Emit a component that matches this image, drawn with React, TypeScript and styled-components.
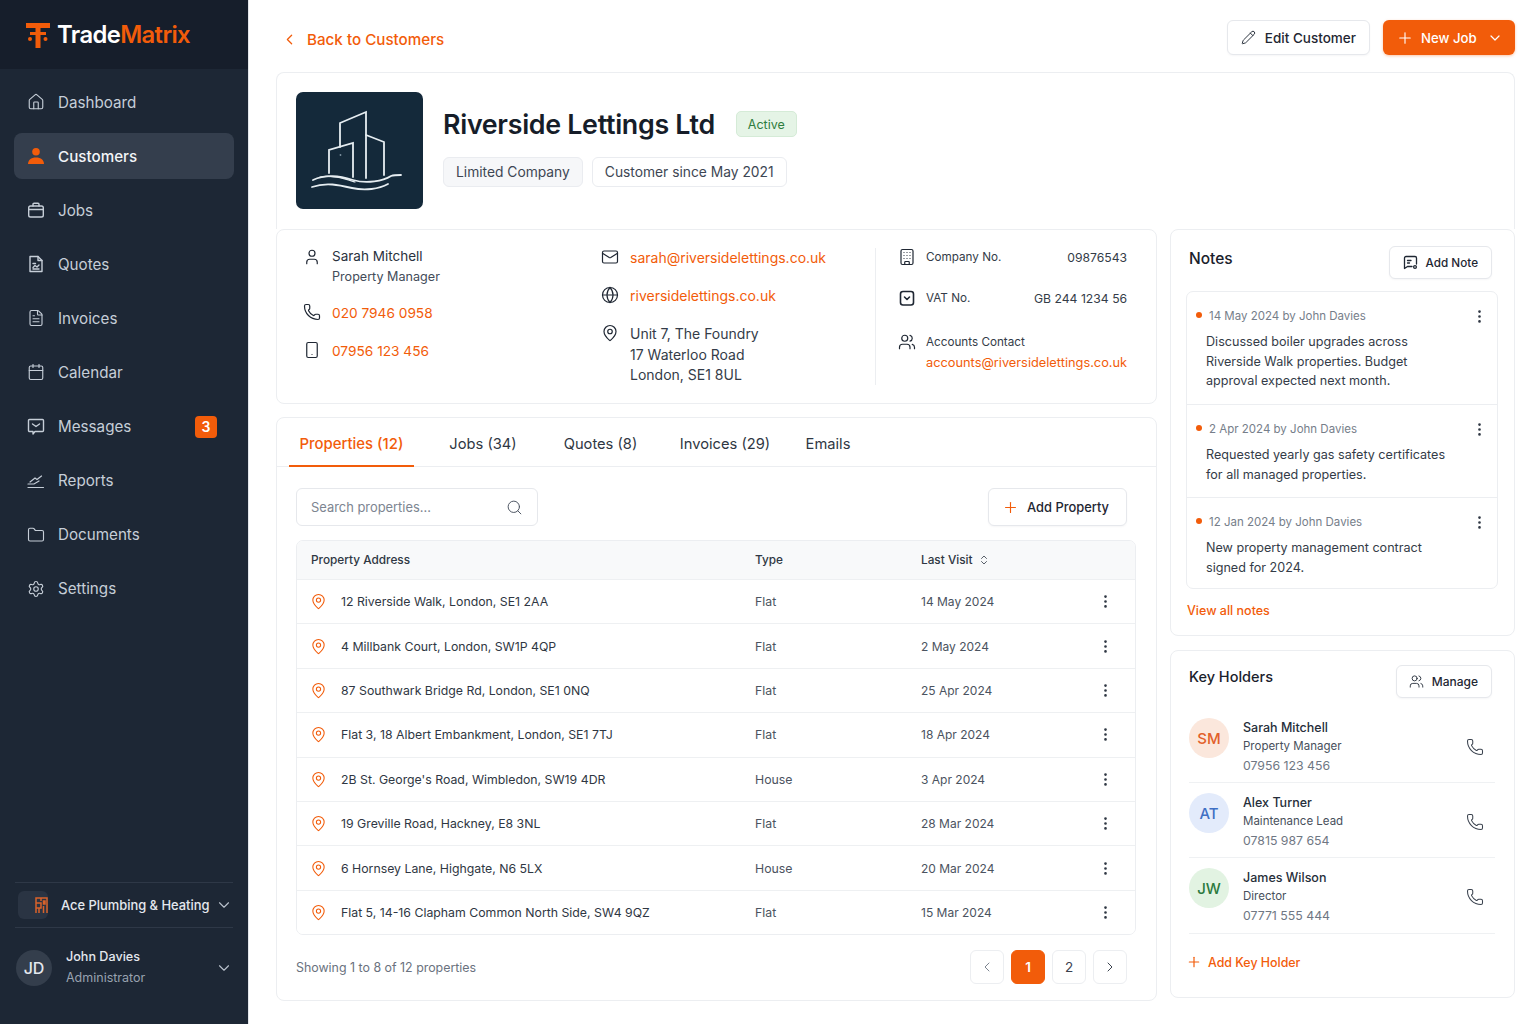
import { ReactNode } from "react";
import styled, { createGlobalStyle } from "styled-components";
import {
  Home,
  FileText,
  Calendar,
  Folder,
  Settings,
  ChevronDown,
  ChevronLeft,
  ChevronRight,
  ChevronsUpDown,
  Pencil,
  Plus,
  User,
  Phone,
  Smartphone,
  Mail,
  Globe,
  MapPin,
  Building,
  Users,
  Search,
  MoreVertical,
} from "lucide-react";

const ORANGE = "#f25c0a";
const INK = "#1f2733";

const GlobalStyle = createGlobalStyle`
  * { box-sizing: border-box; }
  html, body { margin: 0; height: 1024px; overflow: hidden; background: #fff; }
  body { font-family: Inter, "Noto Sans", sans-serif; color: ${INK}; }
`;

const Page = styled.div`
  display: flex;
  height: 1024px;
`;

// sidebar
const Sidebar = styled.aside`
  width: 249px;
  flex: none;
  background: #1d2735;
  border-right: 1px solid #e3e6ea;
  display: flex;
  flex-direction: column;
`;

const Brand = styled.div`
  height: 69px;
  flex: none;
  background: #161e2b;
  display: flex;
  align-items: center;
  gap: 6px;
  padding: 0 0 0 25px;
`;

const BrandName = styled.div`
  font-size: 23.8px;
  font-weight: 600;
  letter-spacing: -0.6px;
  color: #fff;
  span {
    color: ${ORANGE};
  }
`;

const Nav = styled.nav`
  display: flex;
  flex-direction: column;
  gap: 8.1px;
  padding: 10px 14px 0;
`;

const NavItem = styled.div<{ $active?: boolean }>`
  height: 46px;
  display: flex;
  align-items: center;
  gap: 13px;
  padding: 0 17px 0 13px;
  border-radius: 8px;
  font-size: 15.2px;
  font-weight: ${(p) => (p.$active ? 500 : 400)};
  color: ${(p) => (p.$active ? "#f3f5f8" : "#c6ced8")};
  background: ${(p) => (p.$active ? "#343e4d" : "transparent")};
  svg {
    flex: none;
    color: ${(p) => (p.$active ? ORANGE : "#c6ced8")};
  }
`;

const NavBadge = styled.span`
  margin-left: auto;
  width: 22px;
  height: 22px;
  border-radius: 4px;
  background: ${ORANGE};
  color: #fff;
  font-size: 14px;
  font-weight: 600;
  display: flex;
  align-items: center;
  justify-content: center;
`;

const SideFooter = styled.div`
  margin-top: auto;
  padding: 0 15px 35px 15px;
`;

const CompanyRow = styled.div`
  height: 46px;
  display: flex;
  align-items: center;
  border-top: 1px solid #2e3847;
  border-bottom: 1px solid #2e3847;
  padding: 0 0 0 3px;
  font-size: 12.9px;
  font-weight: 500;
  white-space: nowrap;
  color: #e4e8ee;
  svg:last-child {
    flex: none;
    margin-left: auto;
    color: #b9c1cc;
  }
`;

const CompanyIcon = styled.div`
  width: 30px;
  height: 28px;
  flex: none;
  margin-right: 13px;
  border-radius: 6px;
  background: #2a3443;
  display: flex;
  align-items: center;
  justify-content: center;
`;

const UserRow = styled.div`
  display: flex;
  align-items: center;
  gap: 14px;
  padding: 19px 0 0 1px;
  svg {
    margin-left: auto;
    color: #b9c1cc;
  }
`;

const UserAvatar = styled.div`
  width: 36px;
  height: 36px;
  border-radius: 50%;
  background: #343e4c;
  color: #e4e8ee;
  font-size: 16px;
  font-weight: 500;
  display: flex;
  align-items: center;
  justify-content: center;
`;

const UserName = styled.div`
  font-size: 12.6px;
  font-weight: 500;
  color: #e4e8ee;
  line-height: 20px;
`;

const UserRole = styled.div`
  font-size: 12.5px;
  color: #98a2b0;
  line-height: 22px;
`;

// main area
const Main = styled.main`
  flex: 1;
  min-width: 0;
  padding: 20px 21px 0 27px;
  display: flex;
  flex-direction: column;
`;

const TopBar = styled.div`
  height: 35px;
  display: flex;
  align-items: center;
  justify-content: space-between;
  margin-bottom: 17px;
`;

const BackLink = styled.a`
  display: flex;
  align-items: center;
  gap: 9px;
  color: ${ORANGE};
  font-size: 15.2px;
  font-weight: 500;
  padding: 3px 0 0 5px;
`;

const TopActions = styled.div`
  display: flex;
  gap: 13px;
`;

const OutlineButton = styled.button<{ $h?: number; $fs?: number; $pad?: string; $gap?: number }>`
  height: ${(p) => p.$h ?? 35}px;
  display: flex;
  align-items: center;
  gap: ${(p) => p.$gap ?? 9}px;
  padding: ${(p) => p.$pad ?? "0 13px"};
  background: #fff;
  border: 1px solid #e6e8ec;
  border-radius: 6px;
  font-family: inherit;
  font-size: ${(p) => p.$fs ?? 13.5}px;
  font-weight: 500;
  white-space: nowrap;
  color: ${INK};
  box-shadow: 0 1px 2px rgba(20, 30, 45, 0.04);
`;

const PrimaryButton = styled.button`
  height: 35px;
  width: 132px;
  display: flex;
  align-items: center;
  padding: 0 12px 0 13px;
  background: ${ORANGE};
  border: none;
  border-radius: 6px;
  font-family: inherit;
  font-size: 13.2px;
  font-weight: 500;
  white-space: nowrap;
  color: #fff;
  gap: 7px;
  box-shadow: 0 1px 3px rgba(242, 92, 10, 0.35);
  svg:last-child {
    margin-left: auto;
  }
`;

const HeaderCard = styled.section`
  height: 157px;
  flex: none;
  border: 1px solid #eceef1;
  border-bottom: none;
  border-radius: 8px 8px 0 0;
  padding: 19px 19px;
  display: flex;
  gap: 20px;
`;

const CustomerLogo = styled.div`
  width: 127px;
  height: 117px;
  border-radius: 7px;
  background: #14293a;
  flex: none;
  svg {
    display: block;
  }
`;

const HeaderInfo = styled.div`
  padding-top: 13px;
`;

const TitleRow = styled.div`
  display: flex;
  align-items: center;
  gap: 21px;
  height: 38px;
`;

const Title = styled.h1`
  margin: 0;
  font-size: 26.8px;
  font-weight: 600;
  letter-spacing: -0.3px;
  color: #161d29;
`;

const StatusPill = styled.span`
  height: 26px;
  padding: 0 11px;
  display: flex;
  align-items: center;
  border-radius: 5px;
  background: #e5f4e6;
  border: 1px solid #d5ebd7;
  font-size: 12.5px;
  color: #2f7d40;
`;

const TagRow = styled.div`
  display: flex;
  gap: 9px;
  margin-top: 14px;
`;

const Tag = styled.span<{ $tint?: boolean }>`
  height: 30px;
  display: flex;
  align-items: center;
  padding: 0 12px;
  border-radius: 6px;
  border: 1px solid #eaecf0;
  background: ${(p) => (p.$tint ? "#f6f7f9" : "#fff")};
  font-size: 13.8px;
  color: #3d4653;
`;

const Columns = styled.div`
  display: grid;
  grid-template-columns: 881px 345px;
  gap: 13px;
`;

const Column = styled.div<{ $gap: number }>`
  display: flex;
  flex-direction: column;
  gap: ${(p) => p.$gap}px;
`;

const Card = styled.section<{ $h: number }>`
  height: ${(p) => p.$h}px;
  border: 1px solid #eceef1;
  border-radius: 8px;
  background: #fff;
`;

// contact card
const InfoGrid = styled.div`
  display: grid;
  grid-template-columns: 298px 274px 1fr;
  padding: 18px 29px 0 26px;
`;

const InfoCol = styled.div``;

const InfoLine = styled.div<{ $h: number }>`
  display: flex;
  gap: 11px;
  height: ${(p) => p.$h}px;
  svg {
    flex: none;
    color: ${INK};
  }
`;

const InfoName = styled.div`
  font-size: 13.5px;
  line-height: 17px;
  color: #2a323e;
`;

const InfoSub = styled.div`
  font-size: 12.6px;
  line-height: 23px;
  color: #434c59;
`;

const LinkText = styled.a<{ $fs?: number; $lh?: number }>`
  color: ${ORANGE};
  font-size: ${(p) => p.$fs ?? 14}px;
  line-height: ${(p) => p.$lh ?? 20}px;
  display: block;
`;

const Address = styled.div`
  font-size: 14px;
  line-height: 20.5px;
  color: #343c48;
`;

const RegCol = styled.div`
  border-left: 1px solid #eceef1;
  padding-left: 22px;
  height: 137px;
`;

const RegRow = styled.div<{ $h: number }>`
  display: flex;
  gap: 10px;
  height: ${(p) => p.$h}px;
  font-size: 11.7px;
  color: #343c48;
  line-height: 19px;
  svg {
    flex: none;
    color: ${INK};
  }
`;

const RegBody = styled.div`
  flex: 1;
  display: flex;
  justify-content: space-between;
`;

const RegValue = styled.span`
  font-size: 12.2px;
`;

// tabs
const Tabs = styled.div`
  height: 49px;
  display: flex;
  align-items: stretch;
  border-bottom: 1px solid #eceef1;
  padding-left: 12px;
`;

const Tab = styled.div<{ $active?: boolean; $w: number }>`
  width: ${(p) => p.$w}px;
  display: flex;
  align-items: center;
  justify-content: center;
  padding-top: 4px;
  margin-bottom: -1px;
  font-size: ${(p) => (p.$active ? 14.9 : 14.7)}px;
  color: ${(p) => (p.$active ? ORANGE : "#2f3743")};
  font-weight: ${(p) => (p.$active ? 500 : 400)};
  border-bottom: 2px solid ${(p) => (p.$active ? ORANGE : "transparent")};
`;

const Toolbar = styled.div`
  display: flex;
  justify-content: space-between;
  padding: 21px 29px 14px 19px;
`;

const SearchBox = styled.div`
  width: 242px;
  height: 38px;
  display: flex;
  align-items: center;
  justify-content: space-between;
  padding: 0 14px;
  border: 1px solid #e6e8ec;
  border-radius: 6px;
  font-size: 12.9px;
  color: #7d8591;
  svg {
    color: #4e5663;
  }
`;

const AddPropertyIcon = styled(Plus)`
  color: ${ORANGE};
`;

const TableBox = styled.div`
  margin: 0 20px 0 19px;
  border: 1px solid #eceef1;
  border-radius: 7px;
  overflow: hidden;
`;

const Row = styled.div<{ $head?: boolean }>`
  height: ${(p) => (p.$head ? 38 : 44.4)}px;
  display: grid;
  grid-template-columns: 444px 166px 1fr 40px;
  align-items: center;
  padding-left: 14px;
  font-size: ${(p) => (p.$head ? 11.8 : 12.3)}px;
  color: #2f3743;
  background: ${(p) => (p.$head ? "#f8f9fa" : "#fff")};
  font-weight: ${(p) => (p.$head ? 500 : 400)};
  & + & {
    border-top: 1px solid #eef0f2;
  }
`;

const AddressCell = styled.div`
  display: flex;
  align-items: center;
  gap: 14px;
  svg {
    flex: none;
    color: ${ORANGE};
    margin-left: -1px;
  }
`;

const MutedCell = styled.div`
  color: #4b5360;
`;

const DateCell = styled(MutedCell)`
  font-size: 12px;
`;

const SortCell = styled.div`
  display: flex;
  align-items: center;
  gap: 5px;
`;

const KebabCell = styled.div`
  display: flex;
  margin-left: 2px;
  svg {
    color: #2f3743;
  }
`;

const TableFooter = styled.div`
  display: flex;
  align-items: center;
  justify-content: space-between;
  padding: 15px 29px 0 19px;
  font-size: 12.4px;
  color: #6a727e;
`;

const Pager = styled.div`
  display: flex;
  gap: 7px;
`;

const PageButton = styled.div<{ $active?: boolean }>`
  width: 34px;
  height: 34px;
  display: flex;
  align-items: center;
  justify-content: center;
  border-radius: 6px;
  font-size: 13.5px;
  font-weight: ${(p) => (p.$active ? 600 : 400)};
  color: ${(p) => (p.$active ? "#fff" : "#3a424e")};
  background: ${(p) => (p.$active ? ORANGE : "#fff")};
  border: 1px solid ${(p) => (p.$active ? ORANGE : "#eceef1")};
`;

// right column
const PanelHead = styled.div<{ $pad: string }>`
  display: flex;
  align-items: flex-start;
  justify-content: space-between;
  padding: ${(p) => p.$pad};
`;

const PanelTitle = styled.h2<{ $fs: number }>`
  margin: 0;
  padding-top: 3px;
  font-size: ${(p) => p.$fs}px;
  font-weight: 500;
  color: #1a212c;
`;

const NotesBox = styled.div`
  margin: 12px 16px 0 15px;
  border: 1px solid #eceef1;
  border-radius: 7px;
`;

const Note = styled.div<{ $h: number }>`
  height: ${(p) => p.$h}px;
  padding: 14px 9px 0 9px;
  & + & {
    border-top: 1px solid #eceef1;
  }
`;

const NoteMeta = styled.div`
  display: flex;
  align-items: center;
  gap: 7px;
  height: 20px;
  font-size: 11.5px;
  color: #767e8a;
  svg {
    margin-left: auto;
    color: #2f3743;
  }
`;

const NoteDot = styled.span`
  width: 6px;
  height: 6px;
  border-radius: 50%;
  background: ${ORANGE};
  margin-bottom: 2px;
`;

const NoteText = styled.p`
  margin: 6px 0 0 10px;
  font-size: 12.6px;
  line-height: 19.7px;
  color: #343c48;
`;

const ViewAll = styled.a`
  display: block;
  margin: 14px 0 0 16px;
  font-size: 12.5px;
  font-weight: 500;
  color: ${ORANGE};
`;

const Holder = styled.div<{ $h: number }>`
  height: ${(p) => p.$h}px;
  margin: 0 19px 0 18px;
  padding-top: 10px;
  display: flex;
  align-items: flex-start;
  gap: 14px;
  border-bottom: 1px solid #eff1f3;
`;

const HolderAvatar = styled.div<{ $bg: string; $fg: string }>`
  width: 40px;
  height: 40px;
  flex: none;
  border-radius: 50%;
  background: ${(p) => p.$bg};
  color: ${(p) => p.$fg};
  font-size: 15px;
  font-weight: 500;
  display: flex;
  align-items: center;
  justify-content: center;
`;

const HolderBody = styled.div`
  flex: 1;
`;

const HolderName = styled.div`
  font-size: 12.5px;
  font-weight: 500;
  line-height: 19px;
  color: #262e3a;
`;

const HolderRole = styled.div`
  font-size: 11.5px;
  line-height: 19px;
  color: #48505c;
`;

const HolderPhone = styled.div`
  font-size: 12.3px;
  line-height: 19px;
  color: #6f7783;
`;

const HolderCall = styled.div`
  padding: 20px 11px 0 0;
  color: #3a424e;
`;

const AddHolder = styled.a`
  display: flex;
  align-items: center;
  gap: 6px;
  padding: 20px 0 0 15px;
  font-size: 12.4px;
  font-weight: 500;
  color: ${ORANGE};
`;

// drawings
const BrandMark = () => (
  <svg width="26" height="26" viewBox="0 0 26 26" fill="none">
    <path d="M1 1h24v5H15.500v20h-5V6H1z" fill={ORANGE} />
    <rect x="15" y="10" width="6" height="3" fill={ORANGE} />
    <rect x="5" y="10" width="6" height="3" fill={ORANGE} />
    <circle cx="5" cy="17" r="2" fill={ORANGE} />
    <circle cx="20.500" cy="17" r="2" fill={ORANGE} />
  </svg>
);

const FilledUser = () => (
  <svg width="18" height="18" viewBox="0 0 18 18" fill={ORANGE}>
    <circle cx="9" cy="4.800" r="3.800" />
    <path d="M1 17c0-4 3-6.600 8-6.600s8 2.600 8 6.600z" />
  </svg>
);

const JobsIcon = () => (
  <svg width="18" height="18" viewBox="0 0 18 18" fill="none" stroke="currentColor" strokeWidth="1.400" strokeLinecap="round" strokeLinejoin="round">
    <rect x="1.700" y="5" width="14.600" height="11" rx="1.800" />
    <path d="M6 5V3.200a1 1 0 0 1 1-1h4a1 1 0 0 1 1 1V5M1.700 8.500h14.600" />
  </svg>
);

const ReportsIcon = () => (
  <svg width="18" height="18" viewBox="0 0 18 18" fill="none" stroke="currentColor" strokeWidth="1.200" strokeLinecap="round">
    <path d="M1 15.500h15.500M1 12h6l5-3M3 10l5-4 2 1.500 4.500-3.500" />
  </svg>
);

const QuoteIcon = () => (
  <svg width="18" height="18" viewBox="0 0 18 18" fill="none" stroke="currentColor" strokeWidth="1.400" strokeLinejoin="round" strokeLinecap="round">
    <path d="M3 1.500h8l4 4v11H3z" />
    <path d="M11 1.500v4h4M6 8.500h2.500M6 12.500l2-2 2 1.500 2-2M6 14h6" />
  </svg>
);

const MessageIcon = () => (
  <svg width="18" height="18" viewBox="0 0 18 18" fill="none" stroke="currentColor" strokeWidth="1.400" strokeLinejoin="round" strokeLinecap="round">
    <path d="M2.500 1.500h13a1 1 0 0 1 1 1v10a1 1 0 0 1-1 1H8l-2 2.500v-2.500H2.500a1 1 0 0 1-1-1v-10a1 1 0 0 1 1-1z" />
    <path d="M5.500 6l3.500 2.500L12.500 6" />
  </svg>
);

const AddNoteIcon = () => (
  <svg width="15" height="15" viewBox="0 0 15 15" fill="none" stroke="currentColor" strokeWidth="1.300" strokeLinecap="round" strokeLinejoin="round">
    <path d="M9 11.500H4.500l-3 2V3a1.500 1.500 0 0 1 1.500-1.500h9A1.500 1.500 0 0 1 13.500 3v6" />
    <path d="M4.500 5.500h3.500M4.500 8h2" />
    <circle cx="12" cy="12" r="1.400" />
  </svg>
);

const CompanyMark = () => (
  <svg width="13" height="17" viewBox="0 0 13 17" fill="none" stroke="#d9622b" strokeWidth="1.500">
    <path d="M1 16V1h11v15M1 6h5v5H1M6 1v3M8.500 4h1.500v3H8.500zM8.500 9v7M4 11v5" />
  </svg>
);

const VatIcon = () => (
  <svg width="18" height="18" viewBox="0 0 18 18" fill="none" stroke="currentColor" strokeWidth="1.600" strokeLinecap="round" strokeLinejoin="round">
    <rect x="2.500" y="2.500" width="13" height="13.500" rx="2.500" />
    <path d="M6.500 8l2.500 2.500L11.500 8" />
  </svg>
);

const RiversideLogo = () => (
  <svg width="127" height="117" viewBox="0 0 127 117" fill="none" stroke="#e6edf1" strokeLinecap="round">
    <g strokeWidth="1.800">
      <path d="M44 55V31l26-11v66" />
      <path d="M70 43l18 7v33" />
      <path d="M33 81V58l24-7v34" />
    </g>
    <circle cx="44.500" cy="63" r="0.900" fill="#7f93a2" stroke="none" />
    <path strokeWidth="1.800" d="M17 88c13-6 26-4 40 0s30 1 38-4c3-1 7-1 10-1" />
    <path strokeWidth="1.800" d="M16 95c14-5 27-2 40 1s27 1 36-4" />
    <path strokeWidth="1.200" d="M24 85c13-2 22 1 35 5" />
  </svg>
);

interface IconRowProps {
  icon: ReactNode;
  label: string;
  active?: boolean;
  badge?: string;
}

const navItems: IconRowProps[] = [
  { icon: <Home size={18} strokeWidth={1.5} />, label: "Dashboard" },
  { icon: <FilledUser />, label: "Customers", active: true },
  { icon: <JobsIcon />, label: "Jobs" },
  { icon: <QuoteIcon />, label: "Quotes" },
  { icon: <FileText size={18} strokeWidth={1.5} />, label: "Invoices" },
  { icon: <Calendar size={18} strokeWidth={1.5} />, label: "Calendar" },
  { icon: <MessageIcon />, label: "Messages", badge: "3" },
  { icon: <ReportsIcon />, label: "Reports" },
  { icon: <Folder size={18} strokeWidth={1.5} />, label: "Documents" },
  { icon: <Settings size={18} strokeWidth={1.5} />, label: "Settings" },
];

const properties = [
  ["12 Riverside Walk, London, SE1 2AA", "Flat", "14 May 2024"],
  ["4 Millbank Court, London, SW1P 4QP", "Flat", "2 May 2024"],
  ["87 Southwark Bridge Rd, London, SE1 0NQ", "Flat", "25 Apr 2024"],
  ["Flat 3, 18 Albert Embankment, London, SE1 7TJ", "Flat", "18 Apr 2024"],
  ["2B St. George's Road, Wimbledon, SW19 4DR", "House", "3 Apr 2024"],
  ["19 Greville Road, Hackney, E8 3NL", "Flat", "28 Mar 2024"],
  ["6 Hornsey Lane, Highgate, N6 5LX", "House", "20 Mar 2024"],
  ["Flat 5, 14-16 Clapham Common North Side, SW4 9QZ", "Flat", "15 Mar 2024"],
];

const notes = [
  {
    meta: "14 May 2024 by John Davies",
    text: ["Discussed boiler upgrades across", "Riverside Walk properties. Budget", "approval expected next month."],
    h: 112,
  },
  {
    meta: "2 Apr 2024 by John Davies",
    text: ["Requested yearly gas safety certificates", "for all managed properties."],
    h: 93,
  },
  {
    meta: "12 Jan 2024 by John Davies",
    text: ["New property management contract", "signed for 2024."],
    h: 91,
  },
];

const holders = [
  { initials: "SM", bg: "#fbe7dc", fg: "#e2602a", name: "Sarah Mitchell", role: "Property Manager", phone: "07956 123 456", h: 75 },
  { initials: "AT", bg: "#e3ebfb", fg: "#3f6fc4", name: "Alex Turner", role: "Maintenance Lead", phone: "07815 987 654", h: 75 },
  { initials: "JW", bg: "#e2f3e2", fg: "#2c7a3e", name: "James Wilson", role: "Director", phone: "07771 555 444", h: 76 },
];

export default function App() {
  return (
    <>
      <GlobalStyle />
      <Page>
        <Sidebar>
          <Brand>
            <BrandMark />
            <BrandName>
              Trade<span>Matrix</span>
            </BrandName>
          </Brand>
          <Nav>
            {navItems.map((item) => (
              <NavItem key={item.label} $active={item.active}>
                {item.icon}
                {item.label}
                {item.badge && <NavBadge>{item.badge}</NavBadge>}
              </NavItem>
            ))}
          </Nav>
          <SideFooter>
            <CompanyRow>
              <CompanyIcon>
                <CompanyMark />
              </CompanyIcon>
              Ace Plumbing &amp; Heating
              <ChevronDown size={18} strokeWidth={1.5} />
            </CompanyRow>
            <UserRow>
              <UserAvatar>JD</UserAvatar>
              <div>
                <UserName>John Davies</UserName>
                <UserRole>Administrator</UserRole>
              </div>
              <ChevronDown size={18} strokeWidth={1.5} />
            </UserRow>
          </SideFooter>
        </Sidebar>

        <Main>
          <TopBar>
            <BackLink>
              <ChevronLeft size={17} strokeWidth={1.8} />
              Back to Customers
            </BackLink>
            <TopActions>
              <OutlineButton>
                <Pencil size={15} strokeWidth={1.5} />
                Edit Customer
              </OutlineButton>
              <PrimaryButton>
                <Plus size={18} strokeWidth={1.5} />
                New Job
                <ChevronDown size={16} strokeWidth={1.8} />
              </PrimaryButton>
            </TopActions>
          </TopBar>

          <HeaderCard>
            <CustomerLogo>
              <RiversideLogo />
            </CustomerLogo>
            <HeaderInfo>
              <TitleRow>
                <Title>Riverside Lettings Ltd</Title>
                <StatusPill>Active</StatusPill>
              </TitleRow>
              <TagRow>
                <Tag $tint>Limited Company</Tag>
                <Tag>Customer since May 2021</Tag>
              </TagRow>
            </HeaderInfo>
          </HeaderCard>

          <Columns>
            <Column $gap={13}>
              <Card $h={175}>
                <InfoGrid>
                  <InfoCol>
                    <InfoLine $h={55}>
                      <User size={18} strokeWidth={1.6} />
                      <div>
                        <InfoName>Sarah Mitchell</InfoName>
                        <InfoSub>Property Manager</InfoSub>
                      </div>
                    </InfoLine>
                    <InfoLine $h={38}>
                      <Phone size={18} strokeWidth={1.6} />
                      <LinkText $fs={13.7}>020 7946 0958</LinkText>
                    </InfoLine>
                    <InfoLine $h={38}>
                      <Smartphone size={18} strokeWidth={1.6} />
                      <LinkText $fs={13.7}>07956 123 456</LinkText>
                    </InfoLine>
                  </InfoCol>
                  <InfoCol>
                    <InfoLine $h={38}>
                      <Mail size={18} strokeWidth={1.6} />
                      <LinkText>sarah@riversidelettings.co.uk</LinkText>
                    </InfoLine>
                    <InfoLine $h={38}>
                      <Globe size={18} strokeWidth={1.6} />
                      <LinkText>riversidelettings.co.uk</LinkText>
                    </InfoLine>
                    <InfoLine $h={62}>
                      <MapPin size={18} strokeWidth={1.6} />
                      <Address>
                        Unit 7, The Foundry
                        <br />
                        17 Waterloo Road
                        <br />
                        London, SE1 8UL
                      </Address>
                    </InfoLine>
                  </InfoCol>
                  <RegCol>
                    <RegRow $h={41}>
                      <Building size={18} strokeWidth={1.6} />
                      <RegBody>
                        <span>Company No.</span>
                        <RegValue>09876543</RegValue>
                      </RegBody>
                    </RegRow>
                    <RegRow $h={44}>
                      <VatIcon />
                      <RegBody>
                        <span>VAT No.</span>
                        <RegValue>GB 244 1234 56</RegValue>
                      </RegBody>
                    </RegRow>
                    <RegRow $h={45}>
                      <Users size={18} strokeWidth={1.6} />
                      <div>
                        Accounts Contact
                        <LinkText $fs={12.8} $lh={21}>
                          accounts@riversidelettings.co.uk
                        </LinkText>
                      </div>
                    </RegRow>
                  </RegCol>
                </InfoGrid>
              </Card>

              <Card $h={584}>
                <Tabs>
                  <Tab $active $w={125}>
                    Properties (12)
                  </Tab>
                  <Tab $w={138}>Jobs (34)</Tab>
                  <Tab $w={97}>Quotes (8)</Tab>
                  <Tab $w={152}>Invoices (29)</Tab>
                  <Tab $w={54}>Emails</Tab>
                </Tabs>
                <Toolbar>
                  <SearchBox>
                    Search properties...
                    <Search size={17} strokeWidth={1.4} />
                  </SearchBox>
                  <OutlineButton $h={38} $fs={12.9} $pad="0 17px 0 13px" $gap={8}>
                    <AddPropertyIcon size={17} strokeWidth={1.6} />
                    Add Property
                  </OutlineButton>
                </Toolbar>
                <TableBox>
                  <Row $head>
                    <div>Property Address</div>
                    <div>Type</div>
                    <SortCell>
                      Last Visit
                      <ChevronsUpDown size={12} strokeWidth={1.6} />
                    </SortCell>
                    <div />
                  </Row>
                  {properties.map(([address, type, visit]) => (
                    <Row key={address}>
                      <AddressCell>
                        <MapPin size={17} strokeWidth={1.5} />
                        {address}
                      </AddressCell>
                      <MutedCell>{type}</MutedCell>
                      <DateCell>{visit}</DateCell>
                      <KebabCell>
                        <MoreVertical size={17} strokeWidth={1.8} />
                      </KebabCell>
                    </Row>
                  ))}
                </TableBox>
                <TableFooter>
                  Showing 1 to 8 of 12 properties
                  <Pager>
                    <PageButton>
                      <ChevronLeft size={16} strokeWidth={1.5} color="#7d8591" />
                    </PageButton>
                    <PageButton $active>1</PageButton>
                    <PageButton>2</PageButton>
                    <PageButton>
                      <ChevronRight size={16} strokeWidth={1.5} />
                    </PageButton>
                  </Pager>
                </TableFooter>
              </Card>
            </Column>

            <Column $gap={14}>
              <Card $h={407}>
                <PanelHead $pad="16px 22px 0 18px">
                  <PanelTitle $fs={15.5}>Notes</PanelTitle>
                  <OutlineButton $h={33} $fs={11.7} $gap={8}>
                    <AddNoteIcon />
                    Add Note
                  </OutlineButton>
                </PanelHead>
                <NotesBox>
                  {notes.map((note) => (
                    <Note key={note.meta} $h={note.h}>
                      <NoteMeta>
                        <NoteDot />
                        {note.meta}
                        <MoreVertical size={17} strokeWidth={1.8} />
                      </NoteMeta>
                      <NoteText>
                        {note.text.map((line) => (
                          <span key={line}>
                            {line}
                            <br />
                          </span>
                        ))}
                      </NoteText>
                    </Note>
                  ))}
                </NotesBox>
                <ViewAll>View all notes</ViewAll>
              </Card>

              <Card $h={348}>
                <PanelHead $pad="14px 22px 10px 18px">
                  <PanelTitle $fs={14.5}>Key Holders</PanelTitle>
                  <OutlineButton $h={33} $fs={12} $pad="0 13px 0 12px" $gap={8}>
                    <Users size={15} strokeWidth={1.4} />
                    Manage
                  </OutlineButton>
                </PanelHead>
                {holders.map((h) => (
                  <Holder key={h.initials} $h={h.h}>
                    <HolderAvatar $bg={h.bg} $fg={h.fg}>
                      {h.initials}
                    </HolderAvatar>
                    <HolderBody>
                      <HolderName>{h.name}</HolderName>
                      <HolderRole>{h.role}</HolderRole>
                      <HolderPhone>{h.phone}</HolderPhone>
                    </HolderBody>
                    <HolderCall>
                      <Phone size={18} strokeWidth={1.4} />
                    </HolderCall>
                  </Holder>
                ))}
                <AddHolder>
                  <Plus size={16} strokeWidth={1.8} />
                  Add Key Holder
                </AddHolder>
              </Card>
            </Column>
          </Columns>
        </Main>
      </Page>
    </>
  );
}
